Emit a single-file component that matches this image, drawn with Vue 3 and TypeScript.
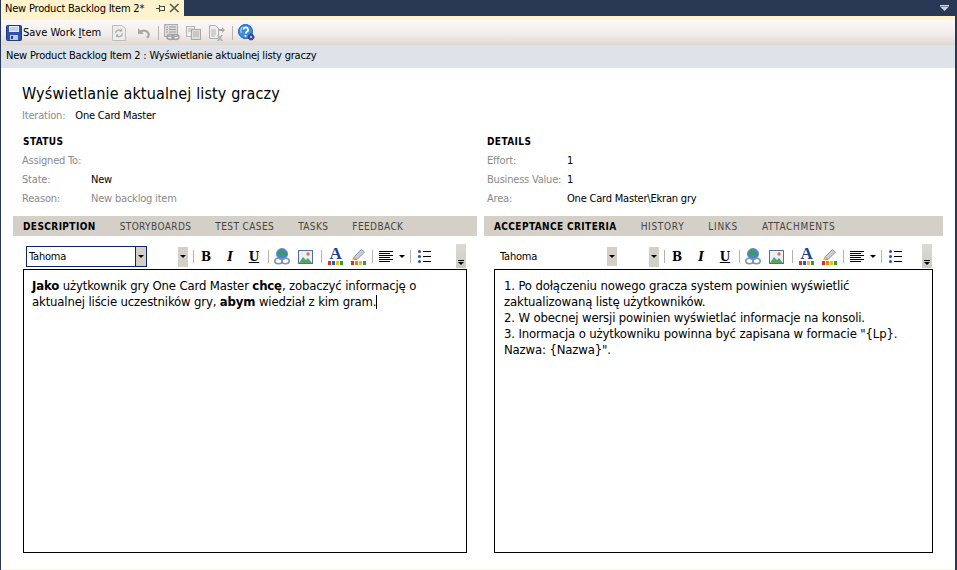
<script setup lang="ts">
interface Seg { t: string; b?: boolean }
interface Pane {
  name: string
  tabs: string[]
  focused: boolean
  lines: Seg[][]
}

const status = [
  { label: 'Assigned To:', value: '', muted: false },
  { label: 'State:', value: 'New', muted: false },
  { label: 'Reason:', value: 'New backlog item', muted: true },
]
const details = [
  { label: 'Effort:', value: '1' },
  { label: 'Business Value:', value: '1' },
  { label: 'Area:', value: 'One Card Master\\Ekran gry' },
]

const panes: Pane[] = [
  {
    name: 'left',
    tabs: ['DESCRIPTION', 'STORYBOARDS', 'TEST CASES', 'TASKS', 'FEEDBACK'],
    focused: true,
    lines: [
      [
        { t: 'Jako', b: true },
        { t: ' użytkownik gry One Card Master ' },
        { t: 'chcę', b: true },
        { t: ', zobaczyć informację o' },
      ],
      [
        { t: 'aktualnej liście uczestników gry, ' },
        { t: 'abym', b: true },
        { t: ' wiedział z kim gram.' },
      ],
    ],
  },
  {
    name: 'right',
    tabs: ['ACCEPTANCE CRITERIA', 'HISTORY', 'LINKS', 'ATTACHMENTS'],
    focused: false,
    lines: [
      [{ t: '1. Po dołączeniu nowego gracza system powinien wyświetlić' }],
      [{ t: 'zaktualizowaną listę użytkowników.' }],
      [{ t: '2. W obecnej wersji powinien wyświetlać informacje na konsoli.' }],
      [{ t: '3. Inormacja o użytkowniku powinna być zapisana w formacie "{Lp}.' }],
      [{ t: 'Nazwa: {Nazwa}".' }],
    ],
  },
]
const fontColors = ['#e03020', '#2060d0', '#f0c010', '#30a030']
const penColors = ['#e03020', '#f08000', '#f0c010', '#30a030']
</script>

<template>
  <div class="page">
    <div class="strip">
      <div class="doc-tab">
        <span class="doc-title">New Product Backlog Item 2*</span>
        <svg class="pin" width="9" height="9" viewBox="0 0 9 9">
          <path d="M0 4.500h3M3.500 1v7M3.500 2.500h5M3.500 6.500h5M8.500 2v5" stroke="#4a4a3a" fill="none" />
        </svg>
        <svg class="close" width="11" height="10" viewBox="0 0 11 10">
          <path d="M1 1l8.500 8M9.500 1L1 9" stroke="#5c5a48" stroke-width="1.700" fill="none" />
        </svg>
      </div>
      <svg class="strip-menu" width="9" height="6" viewBox="0 0 9 6">
        <path d="M0 0h9v1.500H0zM0.500 2h8L4.500 6z" fill="#ced4dd" />
      </svg>
    </div>
    <div class="tab-rule"></div>

    <div class="toolbar">
      <svg width="16" height="16" viewBox="0 0 16 16">
        <rect x="0.500" y="0.500" width="15" height="15" rx="1" fill="#2f52ad" stroke="#1c3a80" />
        <rect x="3" y="1" width="10" height="6" fill="#e8eef8" />
        <path d="M4 3h8M4 5h8" stroke="#9fb2d8" />
        <rect x="4" y="10" width="8" height="5" fill="#c4cad6" />
        <rect x="5" y="11" width="2" height="3" fill="#28407c" />
      </svg>
      <span class="save-label">Save Work <u>I</u>tem</span>
      <svg class="tb-refresh" width="14" height="16" viewBox="0 0 14 16">
        <path d="M0.500 0.500h9l4 3v12H0.500z" fill="#ededed" stroke="#bdbdbd" />
        <path d="M3.500 8a3.500 3.500 0 0 1 6-2M10.500 8.500a3.500 3.500 0 0 1-6 2" fill="none" stroke="#a8a8a8" stroke-width="1.300" />
        <path d="M10 3.500v3H7zM4 12.500v-3h3z" fill="#a8a8a8" />
      </svg>
      <svg class="tb-undo" width="14" height="12" viewBox="0 0 14 12">
        <path d="M1 1v6h6z" fill="#a9a9a9" />
        <path d="M3 5.500a5 5 0 0 1 8.500 1c.6 1.500 0 3-1.500 4.500" fill="none" stroke="#a9a9a9" stroke-width="2.200" />
      </svg>
      <i class="tb-sep"></i>
      <svg class="tb-bulk" width="16" height="17" viewBox="0 0 16 17">
        <rect x="0.500" y="0.500" width="13" height="12" fill="#dcdcdc" stroke="#adadad" />
        <path d="M2 3h2M5 3h7M2 5.500h2M5 5.500h7M2 8h2M5 8h7" stroke="#9d9d9d" />
        <ellipse cx="6.500" cy="13" rx="3.500" ry="2.500" fill="none" stroke="#a0a0a0" stroke-width="1.400" />
        <ellipse cx="11.500" cy="13" rx="3.500" ry="2.500" fill="none" stroke="#a0a0a0" stroke-width="1.400" />
      </svg>
      <svg class="tb-copy" width="15" height="14" viewBox="0 0 15 14">
        <rect x="0.500" y="0.500" width="8" height="10" fill="#eee" stroke="#b4b4b4" />
        <path d="M2 3h5M2 5h5" stroke="#b4b4b4" />
        <rect x="5.500" y="3.500" width="9" height="10" fill="#dedede" stroke="#a8a8a8" />
        <path d="M7 6h6M7 8h6M7 10h6" stroke="#b0b0b0" />
      </svg>
      <svg class="tb-move" width="17" height="16" viewBox="0 0 17 16">
        <path d="M0.500 0.500h6l3 3v10h-9z" fill="#eee" stroke="#aeaeae" />
        <path d="M2 5h5M2 7h5M2 9h5M2 11h4" stroke="#b4b4b4" />
        <path d="M10 4h3V2l3 3-3 3V6h-3z" fill="#a8a8a8" />
        <path d="M8 10h2l1 2 1-2h2l-2 3 2 3h-2l-1-2-1 2H8l2-3z" fill="#b0b0b0" />
      </svg>
      <i class="tb-sep"></i>
      <svg width="17" height="17" viewBox="0 0 17 17">
        <circle cx="7.500" cy="7.500" r="7" fill="#3c8ee0" stroke="#1a5aa8" />
        <path d="M3.500 9a5 5 0 0 1 1-6" fill="none" stroke="#a8d4f8" stroke-width="1.200" />
        <path d="M5.500 5.500a2.300 2.300 0 1 1 3.200 2.300L7.500 9.500" fill="none" stroke="#fff" stroke-width="1.700" />
        <rect x="6.600" y="11" width="1.800" height="1.800" fill="#fff" />
        <circle cx="13" cy="13" r="3" fill="#3a4aa8" stroke="#2a3688" stroke-dasharray="1.500 1" />
        <circle cx="13" cy="13" r="1" fill="#dfe4f5" />
      </svg>
    </div>

    <div class="crumb">New Product Backlog Item 2 : Wyświetlanie aktualnej listy graczy</div>

    <div class="body">
      <h1 class="title">Wyświetlanie aktualnej listy graczy</h1>
      <div class="iteration"><span class="muted">Iteration:</span><span class="iter-value">One Card Master</span></div>

      <div class="fields">
        <section class="group">
          <h2 class="heading">STATUS</h2>
          <div v-for="row in status" :key="row.label" class="row">
            <span class="muted label-status">{{ row.label }}</span>
            <span :class="{ muted: row.muted }">{{ row.value }}</span>
          </div>
        </section>
        <section class="group">
          <h2 class="heading details-heading">DETAILS</h2>
          <div v-for="row in details" :key="row.label" class="row">
            <span class="muted label-details">{{ row.label }}</span>
            <span>{{ row.value }}</span>
          </div>
        </section>
      </div>

      <div class="panes">
        <div v-for="pane in panes" :key="pane.name" class="pane" :class="pane.name">
          <div class="tabs">
            <span v-for="(tab, i) in pane.tabs" :key="tab" class="tab" :class="{ active: i === 0 }">{{ tab }}</span>
          </div>

          <div class="editbar">
            <div class="combo" :class="{ focused: pane.focused }">
              <span class="combo-text">Tahoma</span>
              <span class="drop"><i class="tri"></i></span>
            </div>
            <span class="drop size"><i class="tri"></i></span>
            <i class="sep s1"></i>
            <span class="fmt b">B</span>
            <span class="fmt i">I</span>
            <span class="fmt u">U</span>
            <i class="sep"></i>
            <svg class="globe" width="16" height="17" viewBox="0 0 16 17">
              <circle cx="8" cy="6" r="5.500" fill="#3f86d8" stroke="#6f8cb4" />
              <path d="M5 1.500l3.500 1 1 3-2 2.500-2.500-1.500zM10.500 6l2-2 1 2.500-2 2.500z" fill="#3aa040" />
              <ellipse cx="4.500" cy="13" rx="3.700" ry="2.800" fill="none" stroke="#7f93b0" stroke-width="1.600" />
              <ellipse cx="11.500" cy="13" rx="3.700" ry="2.800" fill="none" stroke="#7f93b0" stroke-width="1.600" />
            </svg>
            <svg class="pic" width="15" height="14" viewBox="0 0 15 14">
              <rect x="0.500" y="0.500" width="14" height="13" fill="#e9f0fa" stroke="#4f6fa5" />
              <path d="M1 13l4-6 3 3 2-2 4 5z" fill="#54a75c" />
              <circle cx="10" cy="4" r="1.700" fill="#e8733a" />
            </svg>
            <i class="sep"></i>
            <span class="color-ic ca">
              <span class="letter">A</span>
              <span class="bar"><i v-for="c in fontColors" :key="c" :style="{ background: c }"></i></span>
            </span>
            <span class="color-ic cb">
              <svg width="15" height="11" viewBox="0 0 15 11">
                <path d="M3 8l7.500-7.500 3 2.500L6 10.500H3z" fill="#c6cfdd" stroke="#6f7f98" stroke-width="0.800" />
                <path d="M1 11l2-4 3 3z" fill="#eab04a" />
              </svg>
              <span class="bar"><i v-for="c in penColors" :key="c" :style="{ background: c }"></i></span>
            </span>
            <i class="sep"></i>
            <span class="lines">
              <i></i><i class="short"></i><i></i><i class="short"></i><i></i><i class="short"></i>
            </span>
            <i class="tri"></i>
            <i class="sep s2"></i>
            <span class="bullets"><i></i><i></i><i></i></span>
            <span class="more"><i class="more-line"></i><i class="tri"></i></span>
          </div>

          <div class="editor">
            <div v-for="(line, n) in pane.lines" :key="n" class="line">
              <template v-for="(seg, k) in line" :key="k"><b v-if="seg.b">{{ seg.t }}</b><template v-else>{{ seg.t }}</template></template><i v-if="pane.focused && n === pane.lines.length - 1" class="caret"></i>
            </div>
          </div>
        </div>
      </div>
    </div>
    <div class="foot"></div>
  </div>
</template>

<style scoped>
.page {
  width: 957px;
  height: 570px;
  padding: 0 2px 0 1px;
  box-sizing: border-box;
  display: flex;
  flex-direction: column;
  overflow: hidden;
  background: #293955;
  font: 11px/13px "DejaVu Sans Condensed", "DejaVu Sans", sans-serif;
  font-stretch: condensed;
  letter-spacing: -0.2px;
  color: #000;
}
.strip {
  height: 16px;
  flex: none;
  display: flex;
  align-items: center;
  justify-content: space-between;
}
.doc-tab {
  width: 183px;
  height: 16px;
  padding-left: 4px;
  box-sizing: border-box;
  background: #fff3cd;
  display: flex;
  align-items: center;
}
.doc-title {
  width: 151px;
  white-space: nowrap;
}
.close {
  margin-left: 4px;
}
.strip-menu {
  margin-right: 6px;
}
.tab-rule {
  height: 4px;
  flex: none;
  background: #fff3cd;
}
.toolbar {
  height: 25px;
  flex: none;
  padding-left: 5px;
  background: linear-gradient(#fbf8f8, #f3eeec 55%, #e0d8d0);
  display: flex;
  align-items: center;
}
.save-label {
  width: 89px;
  margin-left: 1px;
  letter-spacing: 0;
  white-space: nowrap;
}
.tb-refresh {
  margin-right: 11px;
}
.tb-undo {
  margin-right: 7px;
}
.tb-bulk {
  margin-right: 6px;
}
.tb-copy {
  margin-right: 8px;
}
.tb-move {
  margin-right: 6px;
}
.tb-sep {
  width: 1px;
  height: 14px;
  margin-right: 5px;
  background: #b9b4ad;
}
.crumb {
  height: 23px;
  flex: none;
  padding-left: 5px;
  background: #dde3e8;
  line-height: 21px;
  white-space: nowrap;
}
.body {
  flex: 1;
  min-height: 0;
  background: #fff;
  display: flex;
  flex-direction: column;
}
.title {
  margin: 16px 0 0 21px;
  font-size: 16px;
  line-height: 19px;
  font-weight: normal;
  letter-spacing: 0.14px;
}
.iteration {
  margin: 6px 0 0 21px;
  display: flex;
}
.iter-value {
  margin-left: 10px;
}
.muted {
  color: #8a8a8a;
}
.fields {
  display: flex;
  margin-top: 13px;
}
.group {
  width: 465px;
  padding-left: 21px;
  box-sizing: border-box;
}
.heading {
  margin: 0 0 3px 1px;
  font-size: 10px;
  line-height: 13px;
  font-weight: bold;
  letter-spacing: 0.4px;
}
.details-heading {
  margin-left: 0;
}
.row {
  display: flex;
  height: 19px;
  line-height: 19px;
}
.label-status {
  width: 69px;
}
.label-details {
  width: 80px;
}
.panes {
  display: flex;
  gap: 7px;
  margin: 8px 12px 0;
}
.pane {
  display: flex;
  flex-direction: column;
}
.pane.left {
  width: 464px;
}
.pane.right {
  width: 459px;
}
.tabs {
  height: 20px;
  padding-left: 10px;
  background: #d4d0c8;
  display: flex;
  align-items: center;
  gap: 24px;
  font-size: 10px;
  letter-spacing: 0.4px;
  color: #444;
}
.pane.right .tab {
  letter-spacing: 0.7px;
}
.tab.active,
.pane.right .tab.active {
  font-weight: bold;
  letter-spacing: 0.4px;
  color: #000;
}
.editbar {
  height: 33px;
  padding: 8px 0 0 13px;
  box-sizing: border-box;
  display: flex;
  align-items: center;
  position: relative;
}
.combo {
  width: 121px;
  height: 21px;
  box-sizing: border-box;
  display: flex;
  align-items: center;
  justify-content: space-between;
  border: 1px solid transparent;
}
.combo.focused {
  border-color: #0a246a;
}
.combo.focused .drop {
  border-left: 1px solid #0a246a;
}
.combo-text {
  padding-left: 2px;
}
.drop {
  width: 10px;
  height: 19px;
  background: #d4d0c8;
  display: flex;
  align-items: center;
  justify-content: center;
}
.drop.size {
  height: 20px;
  margin-left: 31px;
}
.tri {
  width: 0;
  height: 0;
  flex: none;
  display: block;
  border: 3px solid transparent;
  border-top: 3px solid #000;
  border-bottom: 0;
}
.sep {
  width: 1px;
  height: 13px;
  flex: none;
  background: #b6b2aa;
}
.sep.s1 {
  margin-left: 5px;
}
.fmt {
  width: 24px;
  flex: none;
  text-align: center;
  font: bold 12px "DejaVu Serif", serif;
  letter-spacing: 0;
}
.fmt.i {
  font-style: italic;
}
.fmt.u {
  margin-right: 2px;
  text-decoration: underline;
}
.globe {
  flex: none;
  margin-left: 5px;
}
.pic {
  flex: none;
  margin-left: 8px;
  margin-right: 8px;
}
.color-ic {
  width: 15px;
  flex: none;
  display: flex;
  flex-direction: column;
  align-items: center;
}
.color-ic.ca {
  margin-left: 6px;
}
.color-ic.cb {
  margin-left: 8px;
  margin-right: 6px;
}
.letter {
  font: bold 17px/12px "Liberation Serif", serif;
  color: #24408a;
}
.bar {
  height: 4px;
  margin-top: 1px;
  display: flex;
}
.bar i {
  width: 3px;
  margin-right: 1px;
  display: block;
}
.bar i:last-child {
  margin-right: 0;
}
.lines {
  width: 14px;
  margin: 0 6px;
  flex: none;
  display: flex;
  flex-direction: column;
  gap: 1px;
}
.lines i {
  height: 1px;
  display: block;
  background: #000;
}
.lines i.short {
  width: 11px;
}
.sep.s2 {
  margin-left: 5px;
}
.bullets {
  width: 13px;
  margin-left: 7px;
  display: flex;
  flex-direction: column;
  gap: 4px;
}
.bullets i {
  height: 1px;
  margin-left: 5px;
  display: block;
  background: #000;
  position: relative;
}
.bullets i::before {
  content: "";
  position: absolute;
  left: -5px;
  top: -1px;
  width: 3px;
  height: 3px;
  border-radius: 50%;
  background: #2a50a8;
}
.more {
  position: absolute;
  top: 8px;
  right: 11px;
  width: 10px;
  height: 24px;
  padding-bottom: 3px;
  box-sizing: border-box;
  background: linear-gradient(#dddad4, #cfcbc4);
  display: flex;
  flex-direction: column;
  align-items: center;
  justify-content: flex-end;
}
.more-line {
  width: 6px;
  height: 1px;
  margin-bottom: 1px;
  background: #000;
}
.editor {
  height: 284px;
  margin: 0 10px;
  padding: 8px 8px;
  box-sizing: border-box;
  border: 1px solid #000;
  font-size: 13px;
  line-height: 16px;
  letter-spacing: -0.15px;
}
.pane.right .editor {
  padding-left: 9px;
}
.line {
  white-space: nowrap;
}
.caret {
  display: inline-block;
  width: 1px;
  height: 14px;
  vertical-align: -3px;
  background: #000;
}
.foot {
  height: 1px;
  flex: none;
  background: #fbf6e4;
}
</style>
